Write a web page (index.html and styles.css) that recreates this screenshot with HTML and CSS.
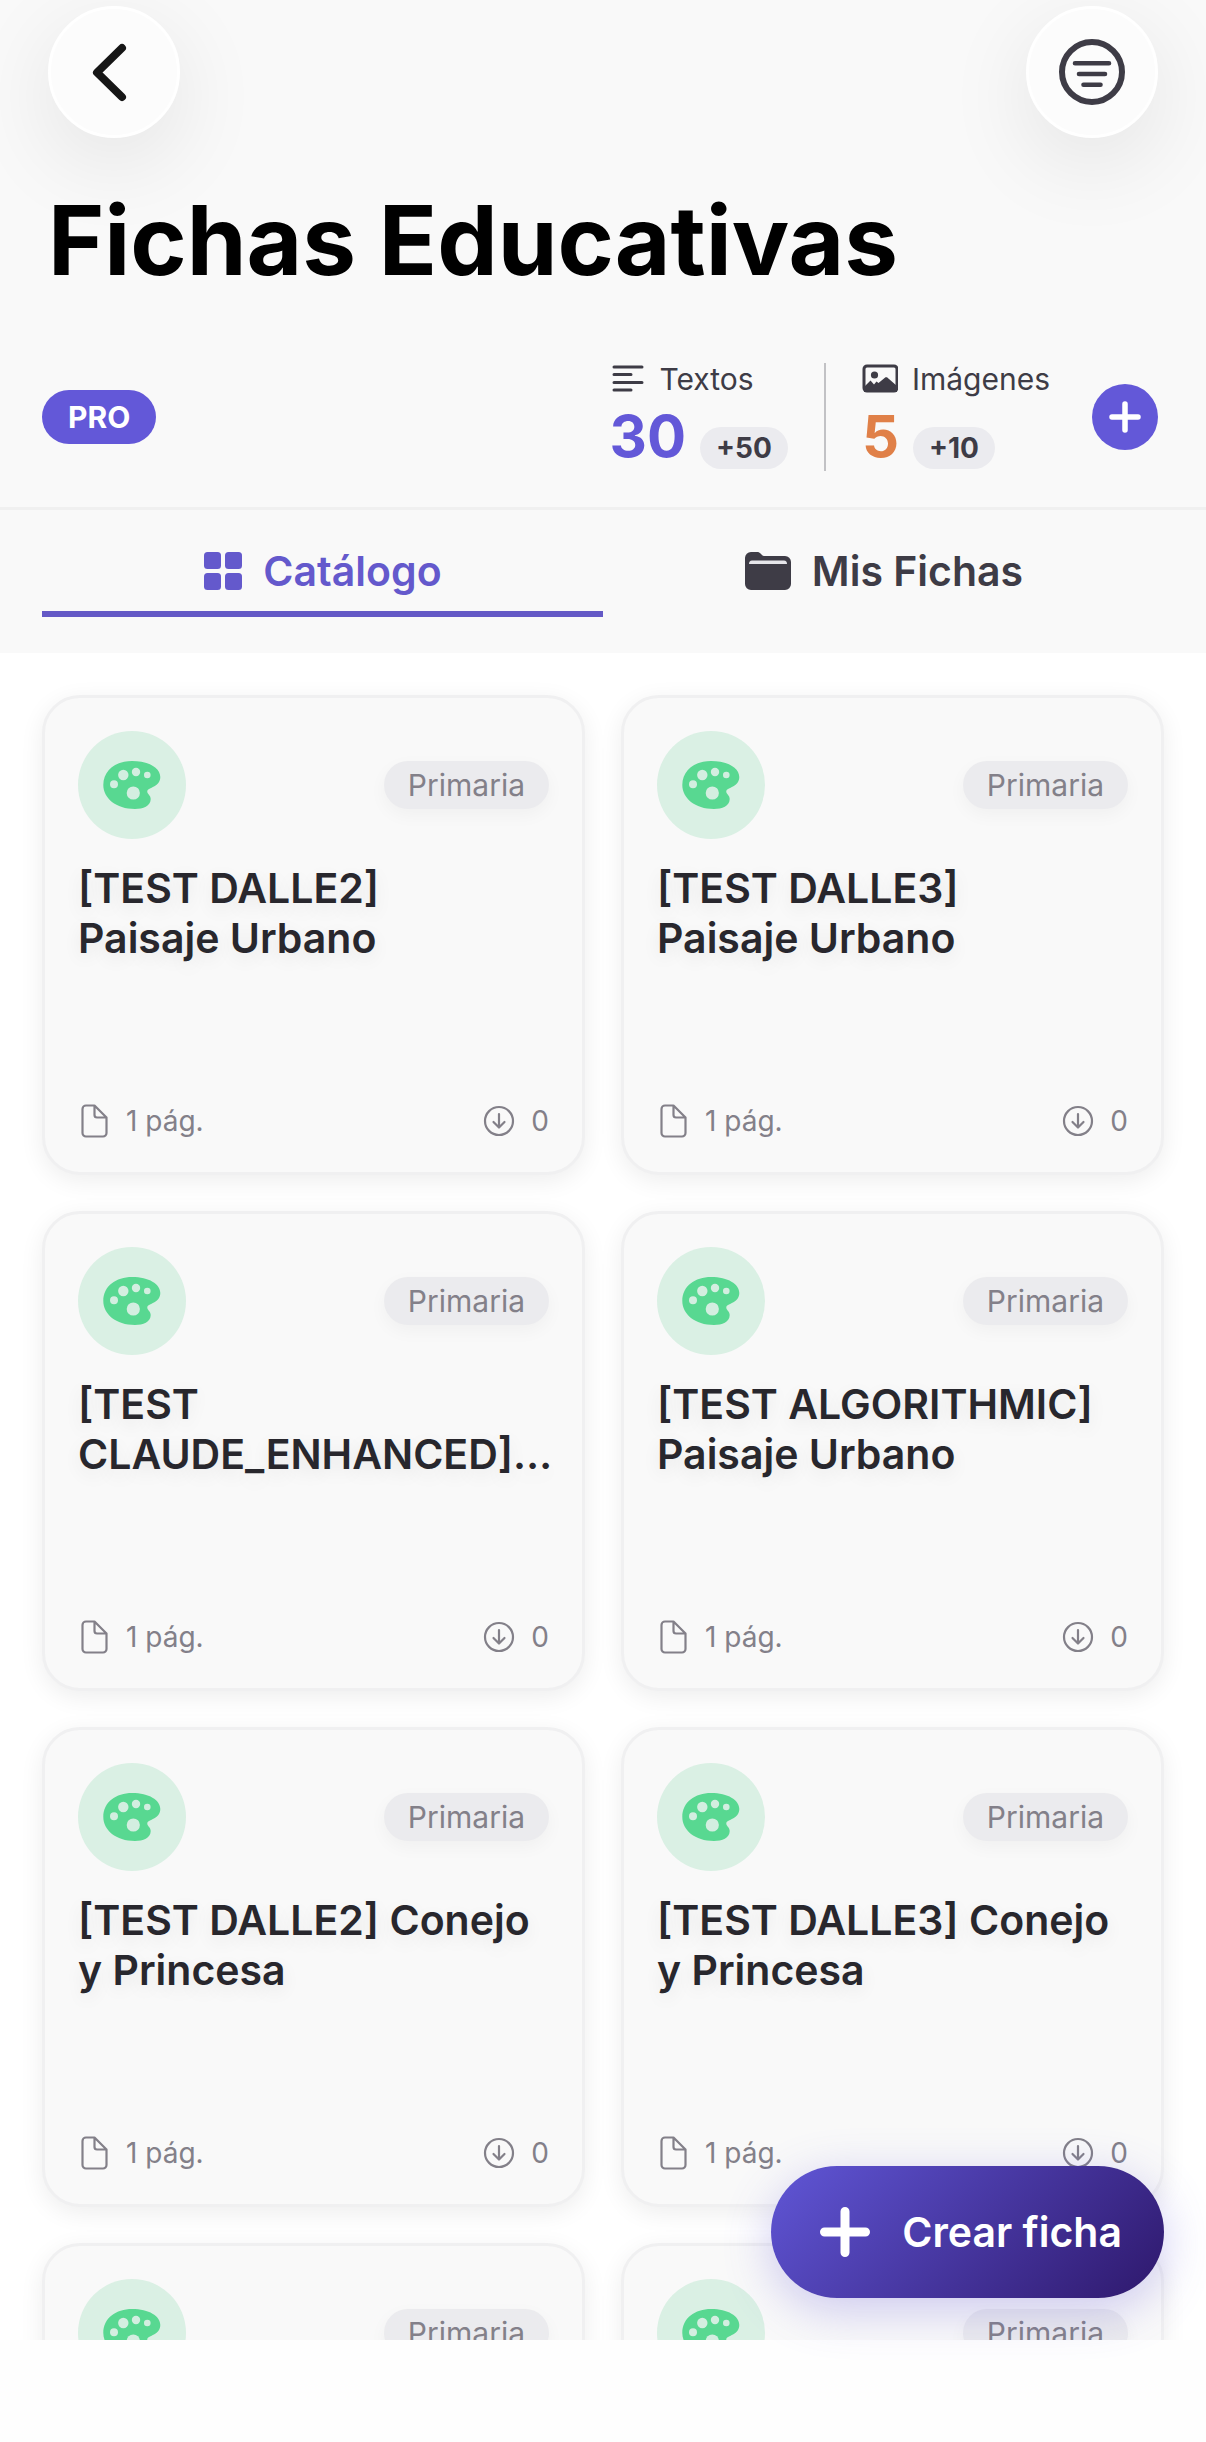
FILE: index.html
```
<!DOCTYPE html>
<html lang="es">
<head>
    <meta charset="UTF-8">
    <meta name="viewport" content="width=device-width, initial-scale=1.0">
    <title>Fichas Educativas</title>
    <link rel="stylesheet" href="styles.css">
</head>
<body>
    <!-- Shared icons -->
    <svg class="sprite" aria-hidden="true">
        <symbol id="icon-palette" viewBox="0 0 60 60">
            <path fill="#58d891" d="M30 6C47 6 58.3 13 58.3 22C58.3 32 46 32.500 45.300 36C44.800 39 48.700 40 48.700 44C48.700 51 41 54 33 54C14 54 1.300 43 1.300 30C1.300 15 14 6 30 6Z"/>
            <g fill="#d3eee0">
                <circle cx="12" cy="29.300" r="4"/>
                <circle cx="21.300" cy="20" r="5.200"/>
                <circle cx="34" cy="17" r="4.200"/>
                <circle cx="45.300" cy="20" r="3.300"/>
                <circle cx="31.300" cy="38" r="6.600"/>
            </g>
        </symbol>
        <symbol id="icon-page" viewBox="0 0 36 36">
            <path fill="none" stroke="currentColor" stroke-width="2.200" stroke-linejoin="round" d="M8 2.500H16.500L28.500 14.500V30A3.500 3.500 0 0 1 25 33.500H8A3.500 3.500 0 0 1 4.500 30V6A3.500 3.500 0 0 1 8 2.500ZM16.500 2.500V12A2.500 2.500 0 0 0 19 14.500H28.500"/>
        </symbol>
        <symbol id="icon-download" viewBox="0 0 36 36">
            <g fill="none" stroke="currentColor" stroke-width="2.200" stroke-linecap="round" stroke-linejoin="round">
                <circle cx="16" cy="18" r="14"/>
                <path d="M16 11V24M10.500 19L16 24.500L21.500 19"/>
            </g>
        </symbol>
    </svg>

    <div class="app">
        <header class="header">
            <div class="nav">
                <button class="nav-button" type="button" aria-label="Volver">
                    <svg width="72" height="72" viewBox="0 0 72 72"><path fill="none" stroke="#161616" stroke-width="8" stroke-linecap="round" stroke-linejoin="round" d="M44 12L19 36.500L44 61"/></svg>
                </button>
                <button class="nav-button" type="button" aria-label="Filtrar">
                    <svg width="72" height="72" viewBox="0 0 72 72">
                        <g fill="none" stroke="#3e3c46" stroke-linecap="round">
                            <circle cx="36" cy="36" r="30" stroke-width="6"/>
                            <path stroke-width="4.600" d="M19 27.300H53M23 38H49M27.500 48.700H44.500"/>
                        </g>
                    </svg>
                </button>
            </div>
            <h1>Fichas Educativas</h1>
            <div class="credits">
                <span class="plan">PRO</span>
                <div class="credit">
                    <div class="credit-label">
                        <svg width="36" height="32" viewBox="0 0 36 32"><path stroke="#3e3c46" stroke-width="3" stroke-linecap="round" d="M4 4H32M4 11.500H21M4 19.500H32M4 27H21"/></svg>
                        Textos
                    </div>
                    <div class="credit-value texts">30 <span class="extra">+50</span></div>
                </div>
                <div class="credit images">
                    <div class="credit-label">
                        <svg width="36" height="32" viewBox="0 0 36 32">
                            <rect x="2" y="3" width="33" height="25" rx="3" fill="none" stroke="#3e3c46" stroke-width="3"/>
                            <circle cx="12.500" cy="12" r="3.600" fill="#3e3c46"/>
                            <path fill="#3e3c46" d="M2 24L8.500 17.500L12 21.500L14.500 18.500L16.500 20L23.500 14.200H25L35 23V29H2Z"/>
                        </svg>
                        Imágenes
                    </div>
                    <div class="credit-value pictures">5 <span class="extra">+10</span></div>
                </div>
                <button class="add-credits" type="button" aria-label="Añadir créditos">
                    <svg width="36" height="36" viewBox="0 0 36 36"><path stroke="#fff" stroke-width="5.500" stroke-linecap="round" d="M18 5V31M5 18H31"/></svg>
                </button>
            </div>
        </header>

        <nav class="tabs">
            <a class="tab active" href="#catalogo">
                <svg width="40" height="40" viewBox="0 0 40 40" fill="currentColor">
                    <rect x="1" y="1" width="17" height="17" rx="3.500"/>
                    <rect x="22" y="1" width="17" height="17" rx="3.500"/>
                    <rect x="1" y="22" width="17" height="17" rx="3.500"/>
                    <rect x="22" y="22" width="17" height="17" rx="3.500"/>
                </svg>
                Catálogo
            </a>
            <a class="tab" href="#mis-fichas">
                <svg width="48" height="40" viewBox="0 0 48 40">
                    <path fill="currentColor" d="M7 1H14C16 1 18 5 20 5H41A6 6 0 0 1 47 11V33A6 6 0 0 1 41 39H7A6 6 0 0 1 1 33V7A6 6 0 0 1 7 1Z"/>
                    <path fill="#e6e6ea" d="M8 9.500H40Q43 9.500 43 13H5Q5 9.500 8 9.500Z"/>
                </svg>
                Mis Fichas
            </a>
        </nav>

        <main class="content" id="catalogo">
            <div class="grid">
                <article class="card">
                    <div class="card-top">
                        <span class="card-icon"><svg width="60" height="60"><use href="#icon-palette"/></svg></span>
                        <span class="level">Primaria</span>
                    </div>
                    <h2>[TEST DALLE2]<br>Paisaje Urbano</h2>
                    <div class="card-meta">
                        <span class="meta"><svg width="36" height="36"><use href="#icon-page"/></svg>1 pág.</span>
                        <span class="meta"><svg width="36" height="36"><use href="#icon-download"/></svg>0</span>
                    </div>
                </article>
                <article class="card">
                    <div class="card-top">
                        <span class="card-icon"><svg width="60" height="60"><use href="#icon-palette"/></svg></span>
                        <span class="level">Primaria</span>
                    </div>
                    <h2>[TEST DALLE3]<br>Paisaje Urbano</h2>
                    <div class="card-meta">
                        <span class="meta"><svg width="36" height="36"><use href="#icon-page"/></svg>1 pág.</span>
                        <span class="meta"><svg width="36" height="36"><use href="#icon-download"/></svg>0</span>
                    </div>
                </article>
                <article class="card">
                    <div class="card-top">
                        <span class="card-icon"><svg width="60" height="60"><use href="#icon-palette"/></svg></span>
                        <span class="level">Primaria</span>
                    </div>
                    <h2>[TEST CLAUDE_ENHANCED]…</h2>
                    <div class="card-meta">
                        <span class="meta"><svg width="36" height="36"><use href="#icon-page"/></svg>1 pág.</span>
                        <span class="meta"><svg width="36" height="36"><use href="#icon-download"/></svg>0</span>
                    </div>
                </article>
                <article class="card">
                    <div class="card-top">
                        <span class="card-icon"><svg width="60" height="60"><use href="#icon-palette"/></svg></span>
                        <span class="level">Primaria</span>
                    </div>
                    <h2>[TEST ALGORITHMIC] Paisaje Urbano</h2>
                    <div class="card-meta">
                        <span class="meta"><svg width="36" height="36"><use href="#icon-page"/></svg>1 pág.</span>
                        <span class="meta"><svg width="36" height="36"><use href="#icon-download"/></svg>0</span>
                    </div>
                </article>
                <article class="card">
                    <div class="card-top">
                        <span class="card-icon"><svg width="60" height="60"><use href="#icon-palette"/></svg></span>
                        <span class="level">Primaria</span>
                    </div>
                    <h2>[TEST DALLE2] Conejo y Princesa</h2>
                    <div class="card-meta">
                        <span class="meta"><svg width="36" height="36"><use href="#icon-page"/></svg>1 pág.</span>
                        <span class="meta"><svg width="36" height="36"><use href="#icon-download"/></svg>0</span>
                    </div>
                </article>
                <article class="card">
                    <div class="card-top">
                        <span class="card-icon"><svg width="60" height="60"><use href="#icon-palette"/></svg></span>
                        <span class="level">Primaria</span>
                    </div>
                    <h2>[TEST DALLE3] Conejo y Princesa</h2>
                    <div class="card-meta">
                        <span class="meta"><svg width="36" height="36"><use href="#icon-page"/></svg>1 pág.</span>
                        <span class="meta"><svg width="36" height="36"><use href="#icon-download"/></svg>0</span>
                    </div>
                </article>
                <article class="card">
                    <div class="card-top">
                        <span class="card-icon"><svg width="60" height="60"><use href="#icon-palette"/></svg></span>
                        <span class="level">Primaria</span>
                    </div>
                </article>
                <article class="card">
                    <div class="card-top">
                        <span class="card-icon"><svg width="60" height="60"><use href="#icon-palette"/></svg></span>
                        <span class="level">Primaria</span>
                    </div>
                </article>
            </div>
            <button class="create" type="button">
                <svg width="52" height="52" viewBox="0 0 52 52"><path stroke="#fff" stroke-width="9" stroke-linecap="round" d="M26 5.500V46.500M5.500 26H46.500"/></svg>
                Crear ficha
            </button>
        </main>
    </div>
</body>
</html>
```
FILE: styles.css
```
* {
    box-sizing: border-box;
}
body {
    margin: 0;
    font-family: Inter, "Liberation Sans", sans-serif;
    background-color: #fefefe;
    color: #3e3c46;
}
button {
    border: none;
    padding: 0;
    font-family: inherit;
    cursor: pointer;
}
svg {
    display: block;
    flex-shrink: 0;
}
.sprite {
    position: absolute;
    width: 0;
    height: 0;
}
.app {
    display: flex;
    flex-direction: column;
    height: 100vh;
    padding-bottom: 102px;
}

/* Header */
.header {
    flex-shrink: 0;
    padding: 6px 48px 36px 42px;
    background-color: #f9f9f9;
    border-bottom: 3px solid #f0f0f0;
}
.nav {
    display: flex;
    justify-content: space-between;
    padding-left: 6px;
}
.nav-button {
    display: flex;
    align-items: center;
    justify-content: center;
    width: 132px;
    height: 132px;
    border: 3px solid #fff;
    border-radius: 50%;
    background-color: #fcfcfc;
    box-shadow: 0 24px 90px rgba(0, 0, 0, 0.09);
}
h1 {
    position: relative;
    margin: 42px 0 63px;
    padding-left: 6px;
    font-size: 96px;
    line-height: 120px;
    font-weight: 700;
    color: #000;
}
.credits {
    display: flex;
    align-items: center;
}
.plan {
    margin-right: auto;
    padding: 0 26px;
    border-radius: 27px;
    background-color: #6358d8;
    font-size: 30px;
    line-height: 54px;
    font-weight: 700;
    color: #fff;
}
.credit {
    display: flex;
    flex-direction: column;
    gap: 8px;
}
.credit.images {
    margin-left: 36px;
    padding-left: 36px;
    border-left: 2px solid #c2c2c5;
}
.credit-label {
    display: flex;
    align-items: center;
    gap: 14px;
    font-size: 30px;
    line-height: 30px;
}
.credit-value {
    display: flex;
    align-items: flex-end;
    gap: 14px;
    padding-bottom: 2px;
    font-size: 58px;
    line-height: 66px;
    font-weight: 700;
}
.texts {
    color: #6358d8;
}
.pictures {
    color: #e08048;
}
.extra {
    padding: 0 16px;
    border-radius: 21px;
    background-color: #ebebef;
    font-size: 28px;
    line-height: 42px;
    font-weight: 700;
    color: #3e3c46;
}
.add-credits {
    display: flex;
    align-items: center;
    justify-content: center;
    width: 66px;
    height: 66px;
    margin-left: 42px;
    border-radius: 50%;
    background-color: #6358d8;
}

/* Tabs */
.tabs {
    display: flex;
    flex-shrink: 0;
    padding: 0 42px 36px;
    background-color: #f9f9f9;
}
.tab {
    display: flex;
    flex: 1;
    align-items: center;
    justify-content: center;
    gap: 20px;
    padding: 37px 0 16px;
    border-bottom: 6px solid transparent;
    font-size: 41px;
    line-height: 48px;
    font-weight: 600;
    color: #3e3c46;
    text-decoration: none;
}
.tab.active {
    border-color: #6459c6;
    color: #6459cc;
}

/* Catalogue */
.content {
    position: relative;
    flex: 1;
    min-height: 0;
}
.grid {
    display: grid;
    grid-template-columns: 1fr 1fr;
    gap: 36px;
    height: 100%;
    padding: 42px;
    overflow: hidden;
    background-color: #fff;
}
.card {
    display: flex;
    flex-direction: column;
    min-width: 0;
    min-height: 480px;
    padding: 33px;
    border: 3px solid #f0f0f1;
    border-radius: 38px;
    background-color: #f9f9f9;
    box-shadow: 0 6px 24px rgba(0, 0, 0, 0.07);
}
.card-top {
    display: flex;
    align-items: center;
    justify-content: space-between;
}
.card-icon {
    display: flex;
    align-items: center;
    justify-content: center;
    width: 108px;
    height: 108px;
    border-radius: 50%;
    background-color: #daf0e4;
}
.level {
    padding: 0 24px;
    border-radius: 24px;
    background-color: #ebebee;
    box-shadow: 0 6px 18px rgba(0, 0, 0, 0.04);
    font-size: 30px;
    line-height: 48px;
    color: #838089;
}
h2 {
    margin: 24px 0 0;
    font-size: 41px;
    line-height: 50px;
    font-weight: 600;
    color: #28272d;
    text-shadow: 0 6px 18px rgba(0, 0, 0, 0.08);
}
.card-meta {
    display: flex;
    justify-content: space-between;
    margin-top: auto;
}
.meta {
    display: flex;
    align-items: center;
    gap: 12px;
    font-size: 28px;
    line-height: 36px;
    color: #838089;
}

/* Floating button */
.create {
    position: absolute;
    right: 42px;
    bottom: 42px;
    display: flex;
    align-items: center;
    gap: 31px;
    height: 132px;
    padding: 0 42px 0 48px;
    border-radius: 66px;
    background: linear-gradient(135deg, #6056d6, #2e186c);
    box-shadow: 0 12px 48px rgba(99, 88, 216, 0.3);
    font-size: 41px;
    font-weight: 600;
    color: #fff;
}
```
